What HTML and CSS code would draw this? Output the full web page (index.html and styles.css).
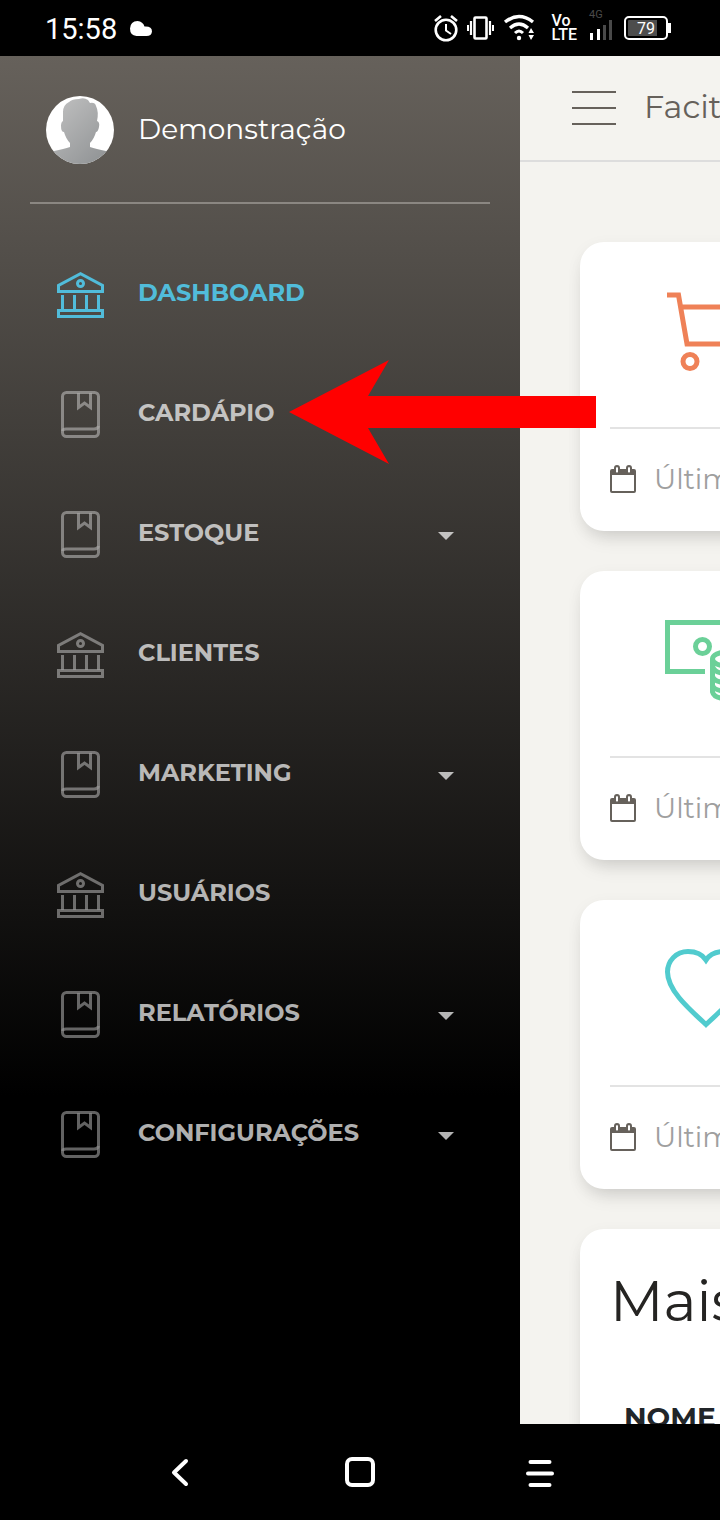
FILE: index.html
```html
<!DOCTYPE html>
<html lang="pt-BR">
<head>
<meta charset="utf-8">
<meta name="viewport" content="width=device-width, initial-scale=1">
<title>Dashboard</title>
<link rel="stylesheet" href="styles.css">
</head>
<body>
<svg class="defs" aria-hidden="true">
  <symbol id="bank" viewBox="0 0 48 52">
    <g fill="none" stroke="currentColor" stroke-width="3">
      <path d="M2.500 24.500V18.500L24.500 6.700L46.500 18.500V24.500Z"/>
      <circle cx="24.500" cy="16.500" r="3"/>
      <path d="M6.500 28V43M18.500 28V43M30.500 28V43M42.500 28V43"/>
      <rect x="2.500" y="43.500" width="44" height="6"/>
    </g>
  </symbol>
  <symbol id="book" viewBox="0 0 48 52">
    <g fill="none" stroke="currentColor" stroke-width="3">
      <rect x="6.500" y="5.500" width="36" height="44" rx="4"/>
      <path d="M22.500 6V20.500L28.500 16L34.500 20.500V6"/>
      <path d="M6.500 44Q7 42 10 42H38Q42 42 42.500 39"/>
    </g>
  </symbol>
  <symbol id="caret" viewBox="0 0 16 14"><path d="M0 6H16L8 14Z" fill="currentColor"/></symbol>
  <symbol id="calendar" viewBox="0 0 26 28">
    <path fill="currentColor" fill-rule="evenodd" d="M2 4H4V3Q4 0 7 0T10 3V4H16V3Q16 0 19 0T22 3V4H24Q26 4 26 6V26Q26 28 24 28H2Q0 28 0 26V6Q0 4 2 4ZM2 10V26H24V10ZM6 3V7Q7 8 8 7V3Q7 1 6 3ZM18 3V7Q19 8 20 7V3Q19 1 18 3Z"/>
  </symbol>
</svg>

<div class="phone">
  <header class="status">
    <div class="status-side">
      <span class="clock">15:58</span>
      <svg width="24" height="20" viewBox="0 0 24 20"><path fill="#fff" d="M7.500 18Q1 17.500 1 10.500Q1.500 3 8.500 3Q14 3.500 15.500 8.500Q23 8 23 13.500Q22.500 18 17.500 18Z"/></svg>
    </div>
    <div class="status-icons">
      <svg width="24" height="28" viewBox="0 0 24 28" fill="none" stroke="#fff"><circle cx="12" cy="16" r="10.300" stroke-width="2.600"/><path d="M12 10V16.500L17 20" stroke-width="2"/><path d="M1 7L7 2M23 7L17 2" stroke-width="2.600"/></svg>
      <svg width="27" height="26" viewBox="0 0 27 26" fill="none" stroke="#fff"><rect x="7.500" y="2.500" width="12" height="21" rx="1" stroke-width="2.600"/><path d="M4 6V20M23 6V20" stroke-width="2.200"/><path d="M1 10V16M26 10V16" stroke-width="2"/></svg>
      <svg width="32" height="28" viewBox="0 0 32 28" fill="none" stroke="#fff"><path d="M2 8Q16 -3 30 8" stroke-width="3.400"/><path d="M7 14Q16 6 25 14" stroke-width="3.200"/><path d="M12 19Q16 15 20 19" stroke-width="3"/><circle cx="16" cy="24" r="2.200" fill="#fff" stroke="none"/><path d="M25.500 19L28 14L31 19ZM25.500 21L28 26L31 21Z" fill="#fff" stroke="none"/></svg>
      <div class="volte"><span>Vo</span><span>LTE</span></div>
      <div class="signal">
        <span class="signal-label">4G</span>
        <svg width="24" height="20" viewBox="0 0 24 20"><path fill="#fff" d="M1 13H4V20H1ZM8 9H11V20H8Z"/><path fill="#4a4a4a" d="M14 5H17V20H14ZM20 0H23V20H20Z"/></svg>
      </div>
      <div class="battery">79</div>
    </div>
  </header>

  <div class="screen">
    <aside class="sidebar">
      <div class="user">
        <svg class="avatar" viewBox="0 0 68 68" role="img" aria-label="Avatar">
          <defs>
            <linearGradient id="skin" x1="0" y1="0" x2="1" y2="1"><stop offset="0" stop-color="#c4c4c4"/><stop offset="1" stop-color="#8b8e90"/></linearGradient>
            <clipPath id="round"><circle cx="34" cy="34" r="34"/></clipPath>
          </defs>
          <g clip-path="url(#round)">
            <rect width="68" height="68" fill="#fff"/>
            <path fill="url(#skin)" d="M17 25V16Q17 9 23 6Q26 3 33 3Q38 1 42 4L44 7Q49 6 50 10Q53 16 51 25Q54 26 53 31Q52 36 50 36Q48 43 44 47V51Q50 53 60 55L68 58V68H0V58L8 55Q18 53 24 51V47Q20 43 18 36Q15 36 15 30Q15 26 17 25Z"/>
          </g>
        </svg>
        <span>Demonstração</span>
      </div>
      <nav class="menu">
        <a class="item active" href="#"><svg class="ico"><use href="#bank"/></svg><span>DASHBOARD</span></a>
        <a class="item" href="#"><svg class="ico"><use href="#book"/></svg><span>CARDÁPIO</span></a>
        <a class="item" href="#"><svg class="ico"><use href="#book"/></svg><span>ESTOQUE</span><svg class="caret"><use href="#caret"/></svg></a>
        <a class="item" href="#"><svg class="ico"><use href="#bank"/></svg><span>CLIENTES</span></a>
        <a class="item" href="#"><svg class="ico"><use href="#book"/></svg><span>MARKETING</span><svg class="caret"><use href="#caret"/></svg></a>
        <a class="item" href="#"><svg class="ico"><use href="#bank"/></svg><span>USUÁRIOS</span></a>
        <a class="item" href="#"><svg class="ico"><use href="#book"/></svg><span>RELATÓRIOS</span><svg class="caret"><use href="#caret"/></svg></a>
        <a class="item" href="#"><svg class="ico"><use href="#book"/></svg><span>CONFIGURAÇÕES</span><svg class="caret"><use href="#caret"/></svg></a>
      </nav>
    </aside>

    <main class="page">
      <div class="topbar">
        <button class="burger" type="button" aria-label="Menu"><i></i><i></i><i></i></button>
        <span class="brand">Facit</span>
      </div>
      <div class="cards">
        <section class="card">
          <div class="card-body">
            <svg class="stat cart" viewBox="0 0 84 84"><path d="M3 5H14.500L23 54H72L80 17H17"/><circle cx="26" cy="71.500" r="7"/><circle cx="66" cy="71.500" r="7"/></svg>
          </div>
          <div class="card-foot"><svg class="cal"><use href="#calendar"/></svg><span>Última</span></div>
        </section>
        <section class="card">
          <div class="card-body">
            <svg class="stat money" viewBox="0 0 84 84"><path d="M41 52.500H3.500V3.500H80V28"/><circle cx="38.500" cy="27.500" r="7"/><ellipse cx="63" cy="40" rx="14.500" ry="7"/><path d="M48.500 40V73Q50 79.500 63 79.500T77.500 73V40M48.500 47Q50 54.500 63 54.500T77.500 47M48.500 57Q50 63.500 63 63.500T77.500 57M48.500 66Q50 72 63 72T77.500 66"/></svg>
          </div>
          <div class="card-foot"><svg class="cal"><use href="#calendar"/></svg><span>Última</span></div>
        </section>
        <section class="card">
          <div class="card-body">
            <svg class="stat heart" viewBox="0 0 84 84"><path d="M42 12C38 6 31 3.500 24 3.500C12 3.500 3.500 13 3.500 24C3.500 42 24 60 42 76.500C60 60 80.500 42 80.500 24C80.500 13 72 3.500 60 3.500C53 3.500 46 6 42 12Z"/></svg>
          </div>
          <div class="card-foot"><svg class="cal"><use href="#calendar"/></svg><span>Última</span></div>
        </section>
        <section class="card list">
          <h2>Mais</h2>
          <table><thead><tr><th scope="col">NOME</th></tr></thead></table>
        </section>
      </div>
    </main>
    <svg class="arrow" viewBox="0 0 308 104" aria-hidden="true"><path fill="#f00" d="M0 52L100 0L79 36H307V68H79L100 104Z"/></svg>
  </div>

  <footer class="softkeys">
    <button type="button" aria-label="Voltar"><svg width="32" height="32" viewBox="0 0 32 32"><path d="M22 5L10 16.500L22 28" stroke-width="4"/></svg></button>
    <button type="button" aria-label="Início"><svg width="32" height="32" viewBox="0 0 32 32"><rect x="3" y="3" width="26" height="26" rx="5" stroke-width="4"/></svg></button>
    <button type="button" aria-label="Recentes"><svg width="32" height="32" viewBox="0 0 32 32"><path d="M6.500 6H25.500M4 17.500H28M6.500 29H25.500" stroke-width="4"/></svg></button>
  </footer>
</div>
</body>
</html>
```
FILE: styles.css
```css
* { box-sizing: border-box; }
body {
  margin: 0;
  background: #000;
  font-family: Montserrat, Inter, "Open Sans", sans-serif;
}
svg { display: block; flex: none; }
.defs { position: absolute; width: 0; height: 0; }
.phone {
  display: flex;
  flex-direction: column;
  height: 100vh;
  overflow: hidden;
}

.status {
  flex: none;
  display: flex;
  align-items: center;
  justify-content: space-between;
  height: 56px;
  padding: 0 52px 0 45px;
  color: #fff;
  font-family: Roboto, sans-serif;
}
.status-side { display: flex; align-items: center; gap: 12px; }
.clock { font-size: 29px; line-height: 36px; padding-top: 2px; }
.status-icons { display: flex; align-items: center; gap: 9px; }
.volte {
  display: grid;
  padding: 0 1px 0 8px;
  font-size: 16px;
  line-height: 14px;
  font-weight: 500;
}
.signal { padding: 0 2px 6px; }
.signal-label { display: block; color: #4a4a4a; font-size: 11px; line-height: 10px; }
.battery {
  position: relative;
  width: 44px;
  height: 24px;
  border: 2px solid #fff;
  border-radius: 5px;
  background: linear-gradient(90deg, #4d4d4d 80%, #000 80%) content-box;
  padding: 2px;
  font-size: 16px;
  line-height: 17px;
  text-align: center;
}
.battery::after {
  content: "";
  position: absolute;
  right: -5px;
  top: 5px;
  width: 3px;
  height: 10px;
  background: #fff;
}

.screen {
  position: relative;
  flex: 1;
  min-height: 0;
  display: flex;
  overflow: hidden;
}
.sidebar {
  flex: none;
  width: 520px;
  padding: 0 30px;
  color: #fff;
  background: linear-gradient(#66615b, #000 76%);
}
.user {
  display: flex;
  align-items: center;
  gap: 24px;
  height: 148px;
  padding: 2px 16px 0;
  border-bottom: 2px solid #8b8782;
  font-size: 28px;
  line-height: 36px;
}
.user span { padding-bottom: 2px; }
.avatar { width: 68px; height: 68px; }
.menu { padding-top: 29px; }
.item {
  display: flex;
  align-items: center;
  gap: 34px;
  height: 120px;
  padding: 0 6px 0 26px;
  color: rgba(255, 255, 255, 0.7);
  font-size: 24px;
  line-height: 28px;
  font-weight: 700;
  text-decoration: none;
}
.ico { width: 48px; height: 52px; opacity: 0.55; }
.active { color: #51bcda; }
.active .ico { opacity: 1; }
.caret { width: 16px; height: 14px; margin: 0 30px 0 auto; }

.page {
  flex: none;
  width: 100%;
  background: #f4f3ef;
  color: #66615b;
}
.topbar {
  display: flex;
  align-items: center;
  gap: 28px;
  height: 106px;
  padding-left: 52px;
  border-bottom: 2px solid #ddd;
}
.burger {
  display: grid;
  gap: 14px;
  width: 44px;
  padding: 0;
  border: 0;
  background: none;
}
.burger i { height: 2px; background: #66615b; }
.brand { padding-bottom: 2px; font-size: 32px; line-height: 40px; font-weight: 400; }
.cards { display: grid; gap: 40px; padding: 80px 60px; }
.card {
  padding: 0 30px;
  border-radius: 24px;
  background: #fff;
  box-shadow: 0 12px 20px -8px rgba(0, 0, 0, 0.15), 0 4px 16px rgba(0, 0, 0, 0.05);
}
.card-body {
  height: 187px;
  padding: 48px 54px 0;
  border-bottom: 2px solid #e3e3e3;
}
.stat { width: 84px; height: 84px; fill: none; stroke: currentColor; stroke-width: 5; }
.cart { color: #ef8157; }
.money { color: #6bd098; }
.heart { color: #51cbce; }
.card-foot {
  display: flex;
  align-items: center;
  gap: 18px;
  height: 102px;
  padding-bottom: 2px;
  font-size: 28px;
  line-height: 36px;
  font-weight: 400;
  color: #9f9f9f;
}
.cal { width: 26px; height: 28px; color: #66615b; }
.list { padding: 36px 30px; color: #252422; }
.list h2 { margin: 0; font-size: 56px; line-height: 72px; font-weight: 400; }
.list table { margin-top: 62px; border-spacing: 0; }
.list th { padding: 0 14px; font-size: 28px; line-height: 36px; color: #212529; }

.arrow { position: absolute; left: 289px; top: 304px; width: 308px; height: 104px; }

.softkeys {
  flex: none;
  display: grid;
  grid-template-columns: repeat(3, 1fr);
  height: 96px;
  padding: 0 90px;
  background: #000;
}
.softkeys button {
  display: flex;
  align-items: center;
  justify-content: center;
  border: 0;
  background: none;
}
.softkeys svg { fill: none; stroke: #fff; stroke-linecap: round; stroke-linejoin: round; }
```
